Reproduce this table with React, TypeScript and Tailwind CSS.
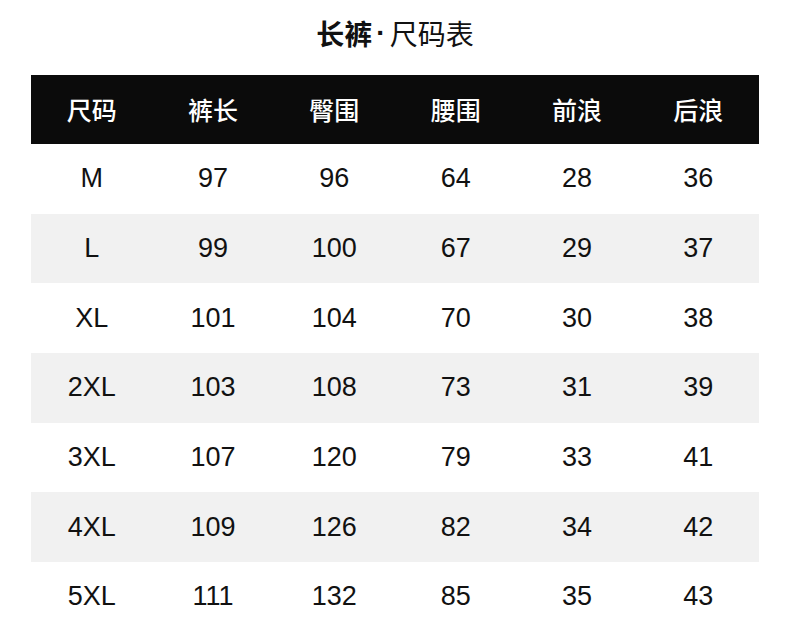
const headers = ["尺码", "裤长", "臀围", "腰围", "前浪", "后浪"]

const rows = [
  ["M", "97", "96", "64", "28", "36"],
  ["L", "99", "100", "67", "29", "37"],
  ["XL", "101", "104", "70", "30", "38"],
  ["2XL", "103", "108", "73", "31", "39"],
  ["3XL", "107", "120", "79", "33", "41"],
  ["4XL", "109", "126", "82", "34", "42"],
  ["5XL", "111", "132", "85", "35", "43"],
]

export default function App() {
  return (
    <div className="w-[790px] h-[638px] bg-white font-['Liberation_Sans','Noto_Sans_CJK_SC',sans-serif]">
      {/* Title */}
      <div className="h-[75px] pb-[10px] flex items-center justify-center text-[28px] text-[#111] font-['Noto_Sans_CJK_SC',sans-serif] leading-none">
        <span className="font-bold">长裤</span>
        <span className="mx-[4px] font-bold font-['Liberation_Sans',sans-serif]">·</span>
        <span>尺码表</span>
      </div>

      <div className="mx-[31px]">
        {/* Header */}
        <div className="h-[69px] bg-[#0b0b0b] grid grid-cols-6 items-center text-white text-[25px] font-medium font-['Noto_Sans_CJK_SC',sans-serif]">
          {headers.map((h) => (
            <div key={h} className="text-center leading-none">
              {h}
            </div>
          ))}
        </div>

        {rows.map((row, i) => (
          <div
            key={row[0]}
            className={`h-[69.7px] grid grid-cols-6 items-center text-[27px] text-[#111] ${i % 2 === 1 ? "bg-[#f1f1f1]" : "bg-white"}`}
          >
            {row.map((cell, j) => (
              <div key={j} className="text-center leading-none">
                {cell}
              </div>
            ))}
          </div>
        ))}
      </div>
    </div>
  )
}
